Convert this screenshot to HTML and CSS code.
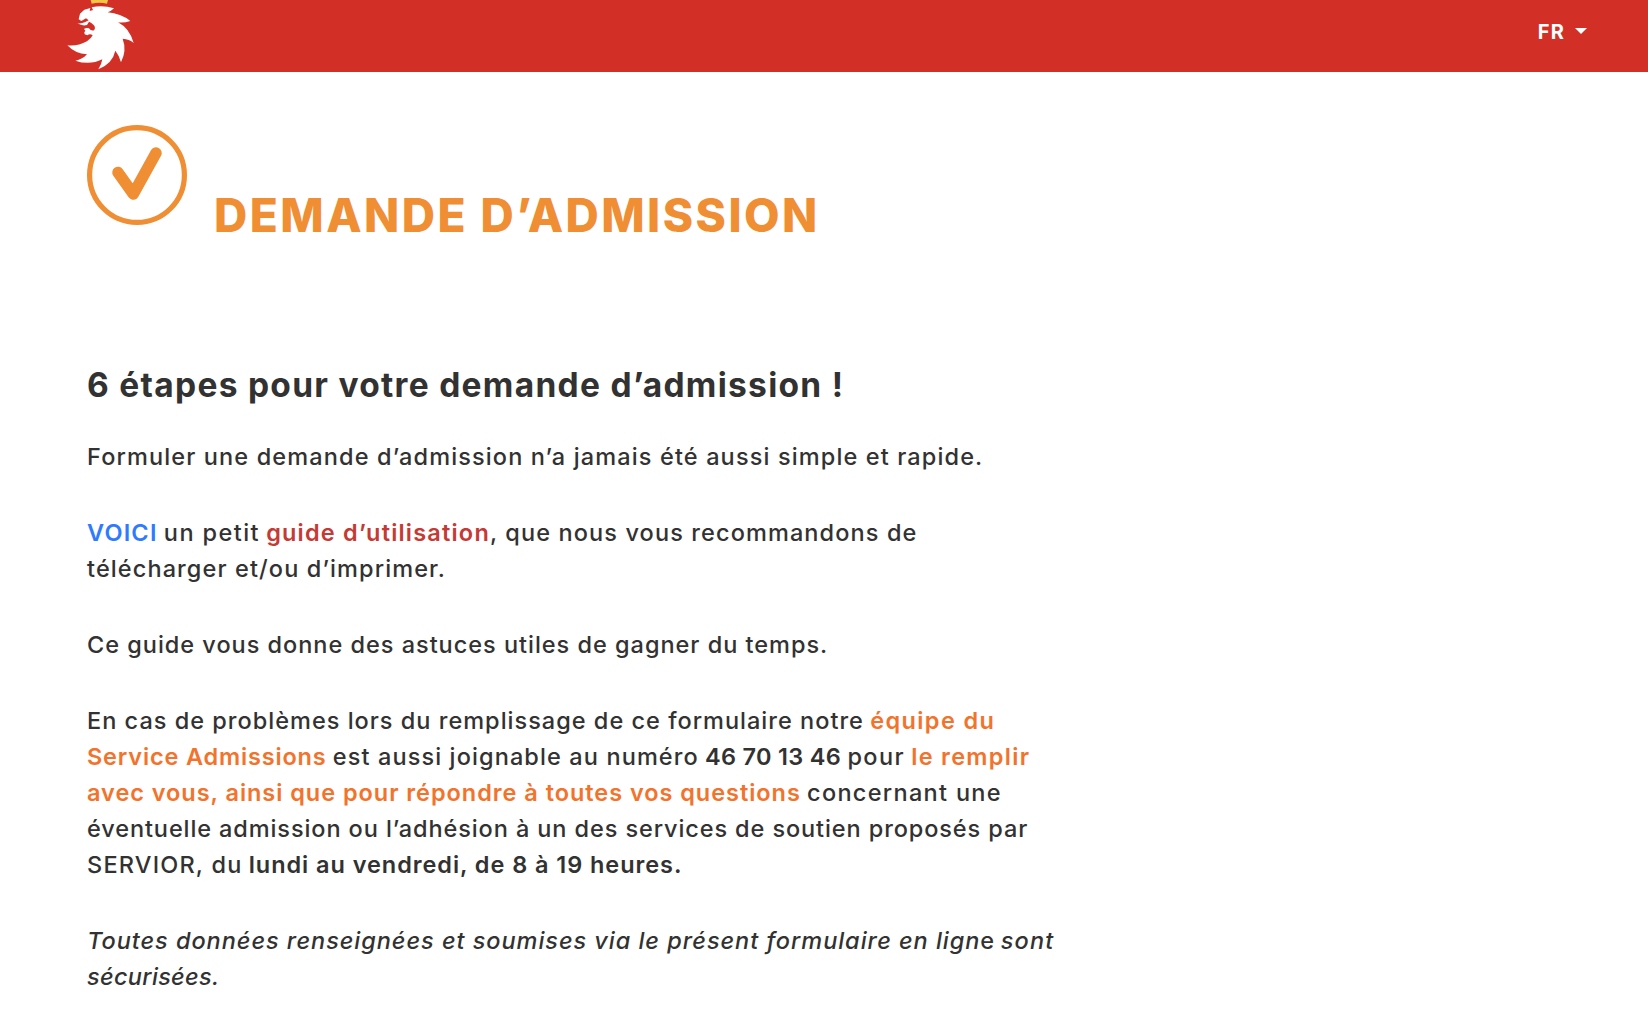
FILE: index.html
```html
<!DOCTYPE html>
<html lang="fr">
<head>
<meta charset="utf-8">
<title>Demande d’admission</title>
<link rel="stylesheet" href="styles.css">
</head>
<body>
<header class="topbar">
  <svg class="logo" viewBox="0 0 300 216" aria-hidden="true">
    <path fill="#f2c544" d="M122 0H174L171 11Q148 6 125 11Z"/>
    <path fill="#fff" d="M125 22Q157 14 192 25Q184 33 173 37Q212 40 241 63Q223 69 204 67Q239 85 251 129Q238 117 218 116Q231 151 213 187Q208 167 196 152Q188 190 145 208Q155 192 157 178Q119 197 76 182Q98 178 111 163Q75 161 52 136Q84 139 111 124Q123 116 128 106Q120 100 112 106L104 103Q101 96 106 92L102 87Q108 82 117 85Q123 94 132 91Q138 83 131 75Q124 67 117 65L111 75Q97 79 82 70Q96 71 106 66L116 61L108 55L94 63L86 58L90 41L103 29L121 24L119 33L129 30Z"/>
  </svg>
  <button class="lang">FR<span class="caret"></span></button>
</header>
<main class="page">
  <div class="heading">
    <svg class="check" viewBox="0 0 100 100" fill="none" stroke="#ef8e33" aria-hidden="true">
      <circle cx="50" cy="50" r="47.4" stroke-width="5.2"/>
      <path d="M31 47.5L46.3 69L69 28" stroke-width="11.5" stroke-linecap="round" stroke-linejoin="round"/>
    </svg>
    <h1 class="title">DEMANDE D’ADMISSION</h1>
  </div>
  <h2 class="subtitle">6 étapes pour votre demande d’admission !</h2>
  <p><span class="t-113">Formuler une demande d’admission n’a jamais été aussi simple et rapide.</span></p>
  <p><a class="link t-120">VOICI</a> <span class="t-140">un petit</span> <strong class="guide t-120">guide d’utilisation</strong><span class="t-111">, que nous vous recommandons de</span><br>
  <span class="t-111">télécharger et/ou d’imprimer.</span></p>
  <p><span class="t-98">Ce guide vous donne des astuces utiles de gagner du temps.</span></p>
  <p><span class="t-101">En cas de problèmes lors du remplissage de ce formulaire notre</span> <strong class="accent t-140">équipe du</strong><br>
  <strong class="accent t-83">Service Admissions</strong> <span class="t-111">est aussi joignable au numéro</span> <strong class="t-30">46 70 13 46</strong> <span class="t-140">pour</span> <strong class="accent t-130">le remplir</strong><br>
  <strong class="accent t-96">avec vous, ainsi que pour répondre à toutes vos questions</strong> <span class="t-130">concernant une</span><br>
  <span class="t-90">éventuelle admission ou l’adhésion à un des services de soutien proposés par</span><br>
  <span class="t-120">SERVIOR, du</span> <strong class="t-94">lundi au vendredi, de 8 à 19 heures.</strong></p>
  <p><em class="t-96">Toutes données renseignées et soumises via le présent formulaire en lign</em><span class="t-30">e</span> <em class="t-120">sont</em><br>
  <em class="t-30">sécurisées.</em></p>
</main>
</body>
</html>
```
FILE: styles.css
```css
* { box-sizing: border-box; }
body {
  margin: 0;
  background: #fff;
  color: #323232;
  font-family: Inter, "Open Sans", sans-serif;
  overflow: hidden;
}
.topbar {
  display: flex;
  justify-content: space-between;
  align-items: flex-start;
  height: 72px;
  padding: 0 61px 0 50px;
  background: #d22f27;
}
.logo { width: 100px; height: 72px; }
.lang {
  display: flex;
  align-items: center;
  gap: 10px;
  margin-top: 20px;
  padding: 0;
  border: 0;
  background: none;
  color: #fff;
  font: 700 20px/24px Inter, sans-serif;
  letter-spacing: 1.2px;
}
.caret {
  margin-bottom: 2px;
  border: 6px solid transparent;
  border-top-color: #fff;
  border-bottom: 0;
}
.page { padding: 53px 87px 0; }
.heading {
  display: flex;
  gap: 27px;
  height: 118px;
  margin-bottom: 122px;
}
.check { width: 100px; height: 100px; }
.title {
  align-self: flex-end;
  margin: 0;
  color: #ef8e33;
  font-size: 46px;
  font-weight: 800;
  line-height: 56px;
  letter-spacing: 2.48px;
}
.subtitle {
  margin: 0 0 34px;
  font-size: 33.5px;
  line-height: 40px;
  letter-spacing: 1.29px;
}
p {
  margin: 0 0 40px;
  font-size: 23.5px;
  font-weight: 500;
  line-height: 36px;
  white-space: nowrap;
}
strong, .link { font-weight: 600; }
.link { color: #2f7bff; }
.guide { color: #c53a35; }
.accent { color: #f2732c; }

/* Tracking steps, in hundredths of a pixel */
.t-30 { letter-spacing: .3px; }
.t-83 { letter-spacing: .83px; }
.t-90 { letter-spacing: .9px; }
.t-94 { letter-spacing: .94px; }
.t-96 { letter-spacing: .96px; }
.t-98 { letter-spacing: .98px; }
.t-101 { letter-spacing: 1.01px; }
.t-111 { letter-spacing: 1.11px; }
.t-113 { letter-spacing: 1.13px; }
.t-120 { letter-spacing: 1.2px; }
.t-130 { letter-spacing: 1.3px; }
.t-140 { letter-spacing: 1.4px; }
```
